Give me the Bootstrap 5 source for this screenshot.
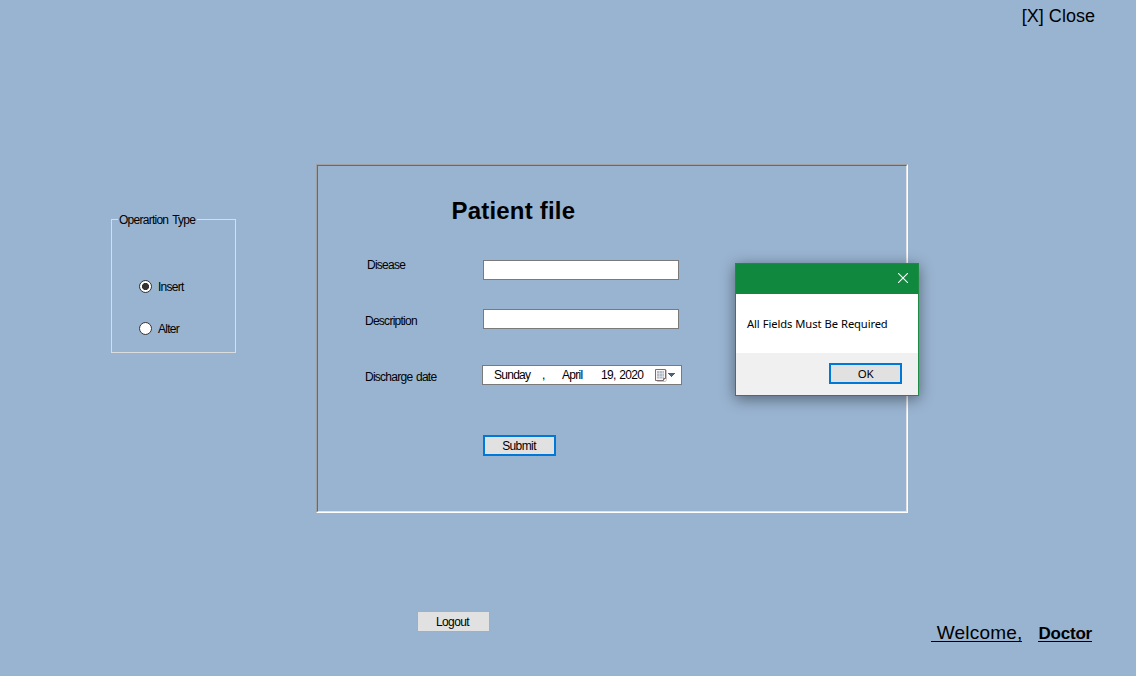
<!DOCTYPE html>
<html lang="en">
<head>
<meta charset="utf-8">
<meta name="viewport" content="width=device-width, initial-scale=1">
<title>Patient file</title>
<link rel="stylesheet" href="https://cdn.jsdelivr.net/npm/bootstrap@5.3.0/dist/css/bootstrap.min.css">
<style>
body{background:#99b4d1;color:#000;font-family:"Liberation Sans",Arial,sans-serif;font-size:12px;line-height:14px;letter-spacing:-.74px;word-spacing:1px;width:1136px;height:676px;overflow:hidden;white-space:nowrap}
.close-link{height:164px;padding:6px 41px 0 0;font-size:18px;line-height:20px;letter-spacing:.02px;word-spacing:0;color:#000}
.main-area{height:349px}
.op-group{width:125px;height:140px;margin:49px 0 0 111px;border:1px solid #dcdcdc;padding:0}
.op-group legend{float:none;width:auto;font-size:inherit;line-height:15px;height:13px;margin:0 0 0 6px;padding:0 2px 0 1px;letter-spacing:-.74px;word-spacing:1.500px}
.op-option{height:14px;padding-left:27px;gap:6px}
.radio-dot{width:13px;height:13px;appearance:none;border:1px solid #333;border-radius:50%;background:#fff;margin:-1px 0 0}
.radio-dot:checked{background:radial-gradient(circle,#333 0 3.2px,#fff 3.9px)}
.file-panel{width:592px;height:349px;margin-left:80px;border:1px solid;border-color:#a0a0a0 #fff #fff #a0a0a0;position:relative}
.file-inner{height:100%;border:1px solid;border-color:#696969 #e3e3e3 #e3e3e3 #696969}
.file-title{font-size:24px;line-height:28px;font-weight:700;letter-spacing:.2px;word-spacing:0;margin:31px 0 0 133.5px}
.field-row{height:20px;padding-left:47px}
.field-name{width:118px}
.field-box{width:196px;height:20px;border:1px solid #7a7a7a;border-radius:0;padding:0;background:#fff;min-height:0}
.date-box{width:200px;height:20px;border:1px solid #7a7a7a;background:#fff;margin-left:-1px;padding-left:11px;line-height:18px}
.win-btn{width:73px;height:21px;border:2px solid #0078d7;border-radius:0;background:#e1e1e1;padding:1px 0 0;font-size:inherit;line-height:16px;letter-spacing:-.6px;color:#000}
.logout-btn{border:1px solid #adadad;height:21px;width:73px;line-height:18px;padding-right:2px}
.footer-area{padding:98px 44px 0 417px}
.welcome{font-size:19px;line-height:22px;letter-spacing:.2px;word-spacing:0;margin:11px 16px 0 0;white-space:pre}
.doctor{font-size:17px;line-height:23px;letter-spacing:-.2px;margin-top:11px}
.ruled{border-bottom:1px solid #000;height:20px}
.msg-dialog{left:418px;top:98px;width:184px;height:133px;border:1px solid #1f8b45;background:#fff;box-shadow:0 3px 14px rgba(0,0,0,.45);font-family:"Noto Sans","Open Sans",sans-serif;letter-spacing:0;word-spacing:0}
.msg-bar{height:30px;background:#10893e;padding:0 10px 2px 0}
.msg-text{height:59px;padding:0 0 0 11px;font-size:11.2px;letter-spacing:-.12px;word-spacing:.4px}
.msg-foot{height:42px;background:#f0f0f0;padding:0 16px 2px 0}
.msg-foot .win-btn{font-size:11.5px;letter-spacing:-.2px;font-family:inherit}
</style>
</head>
<body>
<header class="close-link text-end">[X] Close</header>
<main class="main-area d-flex align-items-start">
  <fieldset class="op-group">
    <legend>Operartion Type</legend>
    <label class="op-option d-flex align-items-center" style="margin-top:54px"><input class="radio-dot" type="radio" name="op" checked><span>Insert</span></label>
    <label class="op-option d-flex align-items-center" style="margin-top:28px"><input class="radio-dot" type="radio" name="op"><span>Alter</span></label>
  </fieldset>
  <section class="file-panel">
    <div class="file-inner overflow-hidden">
      <h1 class="file-title">Patient file</h1>
      <div class="field-row d-flex" style="margin-top:35px"><label class="field-name" style="padding:0 0 0 2px;margin-top:-2px">Disease</label><input class="field-box form-control" type="text"></div>
      <div class="field-row d-flex" style="margin-top:29px"><label class="field-name" style="margin-top:5px">Description</label><input class="field-box form-control" type="text"></div>
      <div class="field-row d-flex" style="margin-top:36px"><label class="field-name" style="margin-top:5px">Discharge date</label>
        <div class="date-box d-flex">
          <span style="width:48px">Sunday</span><span style="width:20px">,</span><span style="width:39px">April</span><span style="width:54px;letter-spacing:-.68px">19, 2020</span>
          <svg width="22" height="16" viewBox="0 0 22 16" style="margin-top:2px"><path d="M2 13.500h8.500l1-2V2" fill="none" stroke="#c9c2c0"/><path d="M.5 1.500h10v9l-2 2h-8z" fill="#f7f7f8" stroke="#796c6c"/><path d="M2 3h7v7.500H2z" fill="#b5bcc8"/><path d="M2 5.500h7M2 8.500h7M4.500 3v8M7.500 3v8" stroke="#dfe3ea" stroke-width=".6"/><path d="M8.500 12.500v-2h2" fill="#fff" stroke="#796c6c"/><path d="M13 5h7v1h-1v1h-1v1h-1v1h-1V8h-1V7h-1V6h-1z" fill="#46608b"/></svg>
        </div>
      </div>
      <button class="win-btn btn d-block" style="margin:50px 0 0 165px;padding-right:1px">Submit</button>
    </div>
    <div class="msg-dialog position-absolute" role="dialog">
      <div class="msg-bar d-flex justify-content-end align-items-center"><svg width="10" height="10" viewBox="0 0 10 10" stroke="#fff" stroke-width="1.100"><path d="M0 0l10 10M10 0L0 10"/></svg></div>
      <div class="msg-text d-flex align-items-center">All Fields Must Be Required</div>
      <div class="msg-foot d-flex justify-content-end align-items-center"><button class="win-btn btn">OK</button></div>
    </div>
  </section>
</main>
<footer class="footer-area d-flex align-items-start">
  <button class="win-btn logout-btn btn">Logout</button>
  <div class="welcome ruled ms-auto"> Welcome,</div>
  <div class="doctor ruled fw-bold">Doctor</div>
</footer>
<script src="https://cdn.jsdelivr.net/npm/bootstrap@5.3.0/dist/js/bootstrap.bundle.min.js"></script>
</body>
</html>
